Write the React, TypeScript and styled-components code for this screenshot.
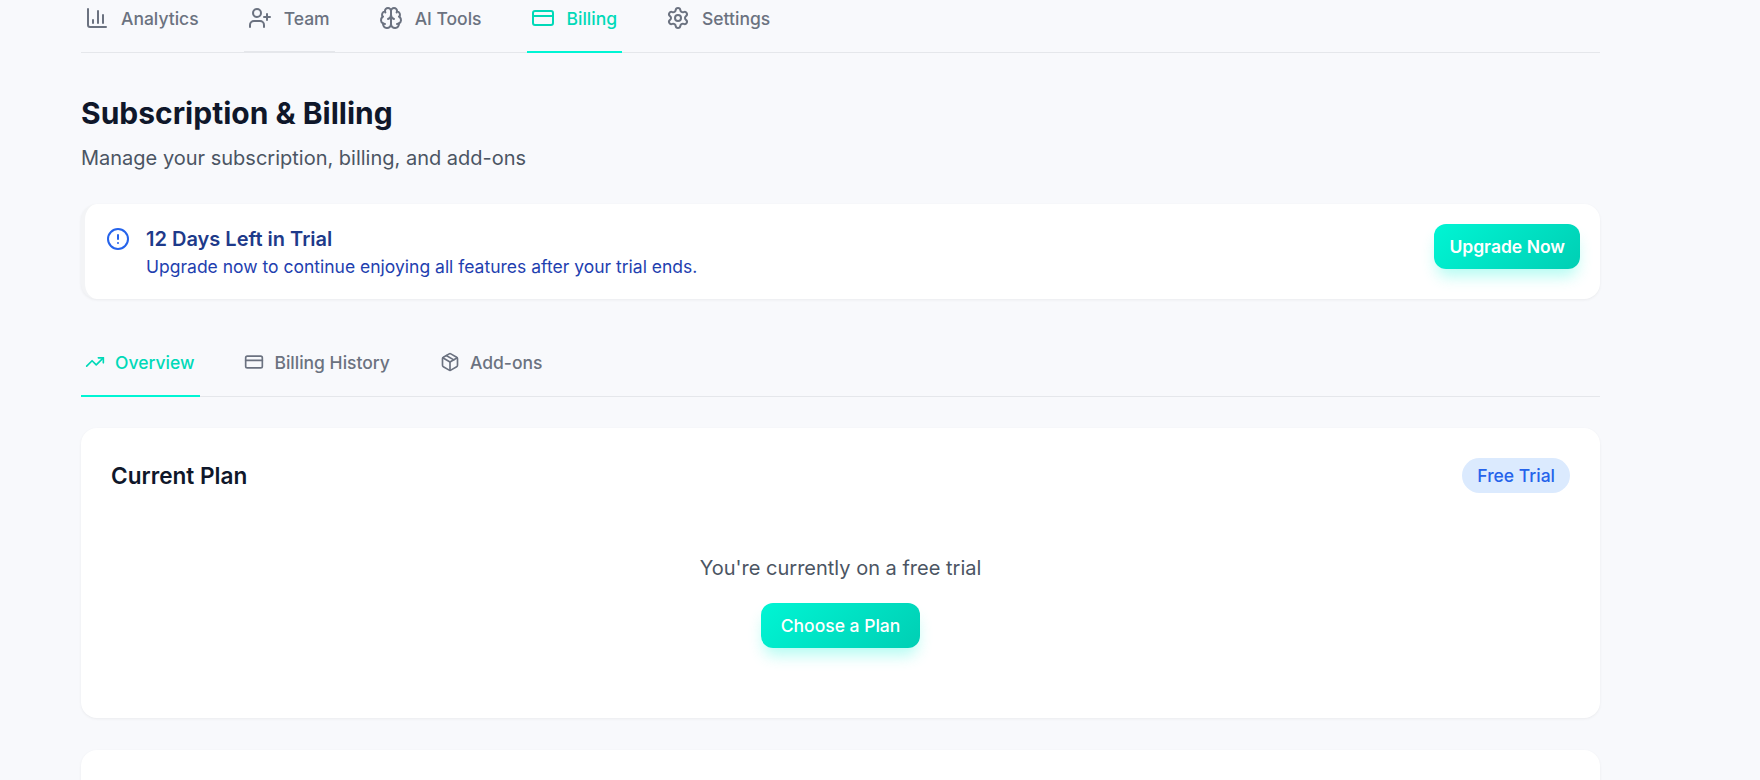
import styled, { createGlobalStyle } from "styled-components";
import {
  ChartColumn,
  CircleAlert,
  CreditCard,
  Package,
  Settings,
  TrendingUp,
  UserPlus,
} from "lucide-react";

const GlobalStyle = createGlobalStyle`
  html, body {
    margin: 0;
    height: 780px;
    overflow: hidden;
    background: #f8f9fc;
    font-family: "Inter", "Liberation Sans", sans-serif;
  }
`;

const Page = styled.div`
  width: 1519px;
  margin-left: 81px;
`;

const TopNav = styled.nav`
  display: flex;
  gap: 40px;
  height: 53px;
  border-bottom: 1px solid #e5e7eb;
  box-sizing: border-box;
`;

const TopTab = styled.div<{ $active?: boolean; $hover?: boolean }>`
  display: flex;
  align-items: center;
  gap: 12px;
  height: 53px;
  box-sizing: border-box;
  padding: 0 5px 15px 4px;
  font-size: 17.5px;
  font-weight: 500;
  color: ${({ $active }) => ($active ? "#00d9b8" : "#6b7280")};
  border-bottom: 2px solid
    ${({ $active, $hover }) => ($active ? "#00f5d4" : $hover ? "#e5e7eb" : "transparent")};
`;

const Heading = styled.header`
  padding-top: 42px;
  margin-bottom: 30px;
`;

const Title = styled.h1`
  margin: 0 0 11px;
  font-size: 30px;
  line-height: 36px;
  font-weight: 700;
  color: #0f172a;
`;

const Subtitle = styled.p`
  margin: 0;
  font-size: 20px;
  line-height: 32px;
  color: #4b5563;
`;

const Alert = styled.section`
  display: flex;
  align-items: flex-start;
  justify-content: space-between;
  height: 95px;
  box-sizing: border-box;
  padding: 20px 20px 0 21px;
  background: #fff;
  border-left: 4px solid #f3f4f6;
  border-radius: 16px;
  box-shadow: 0 1px 3px rgba(0, 0, 0, 0.06);
`;

const AlertBody = styled.div`
  display: flex;
  align-items: flex-start;
  gap: 16px;
  padding-top: 1px;
  color: #2563eb;

  svg {
    margin-top: 2px;
  }
`;

const AlertTitle = styled.div`
  font-size: 20px;
  line-height: 28px;
  font-weight: 600;
  color: #1e3a8a;
`;

const AlertText = styled.div`
  font-size: 17.5px;
  line-height: 28px;
  color: #1e40af;
`;

const GradientButton = styled.button`
  height: 45px;
  padding: 0 15px;
  border: 0;
  border-radius: 12px;
  font-family: inherit;
  font-size: 17.5px;
  color: #fff;
  background: linear-gradient(135deg, #00f5d4, #00cfb4);
  box-shadow: 0 10px 15px -3px rgba(0, 245, 212, 0.3);
`;

const UpgradeButton = styled(GradientButton)`
  font-weight: 600;
`;

const PlanButton = styled(GradientButton)`
  padding: 0 20px;
  font-weight: 500;
`;

const SubNav = styled.nav`
  display: flex;
  gap: 40px;
  margin-top: 30px;
  height: 68px;
  box-sizing: border-box;
  border-bottom: 1px solid #e5e7eb;
`;

const SubTab = styled.div<{ $active?: boolean }>`
  display: flex;
  align-items: center;
  gap: 10px;
  height: 68px;
  box-sizing: border-box;
  padding: 0 6px 0 4px;
  font-size: 17.5px;
  font-weight: 500;
  color: ${({ $active }) => ($active ? "#00d9b8" : "#6b7280")};
  border-bottom: 2px solid ${({ $active }) => ($active ? "#00f5d4" : "transparent")};
`;

const Card = styled.section`
  margin-top: 31px;
  background: #fff;
  border-radius: 16px;
  box-shadow: 0 1px 3px rgba(0, 0, 0, 0.06);
  padding: 30px;
  box-sizing: border-box;
`;

const PlanCard = styled(Card)`
  height: 290px;
`;

const CardHeader = styled.div`
  display: flex;
  align-items: center;
  justify-content: space-between;
`;

const CardTitle = styled.h2`
  margin: 0;
  font-size: 22.6px;
  line-height: 28px;
  font-weight: 600;
  color: #0f172a;
`;

const Pill = styled.span`
  padding: 0 15px;
  height: 35px;
  line-height: 35px;
  border-radius: 999px;
  font-size: 17.5px;
  font-weight: 500;
  color: #2563eb;
  background: #dbeafe;
`;

const EmptyPlan = styled.div`
  display: flex;
  flex-direction: column;
  align-items: center;
  gap: 19px;
  padding-top: 59px;
`;

const EmptyText = styled.p`
  margin: 0;
  font-size: 20px;
  line-height: 32px;
  color: #4b5563;
`;

const NextCard = styled(Card)`
  margin-top: 32px;
  height: 120px;
`;

const BrainIcon = () => (
  <svg
    width="24"
    height="24"
    viewBox="0 0 24 24"
    fill="none"
    stroke="currentColor"
    strokeWidth="2"
    strokeLinecap="round"
    strokeLinejoin="round"
  >
    <path d="M12 5a3 3 0 1 0-5.997.125 4 4 0 0 0-2.526 5.77 4 4 0 0 0 .556 6.588A4 4 0 1 0 12 18Z" />
    <path d="M12 5a3 3 0 1 1 5.997.125 4 4 0 0 1 2.526 5.77 4 4 0 0 1-.556 6.588A4 4 0 1 1 12 18Z" />
    <path d="M15 13a4.5 4.5 0 0 1-3-4 4.5 4.5 0 0 1-3 4" />
    <path d="M17.599 6.5a3 3 0 0 0 .399-1.375" />
    <path d="M6.003 5.125A3 3 0 0 0 6.401 6.5" />
    <path d="M3.477 10.896a4 4 0 0 1 .585-.396" />
    <path d="M19.938 10.5a4 4 0 0 1 .585.396" />
    <path d="M6 18a4 4 0 0 1-1.967-.516" />
    <path d="M19.967 17.484A4 4 0 0 1 18 18" />
  </svg>
);

export default function App() {
  return (
    <>
      <GlobalStyle />
      <Page>
        <TopNav>
          <TopTab>
            <ChartColumn size={24} />
            Analytics
          </TopTab>
          <TopTab $hover>
            <UserPlus size={24} />
            Team
          </TopTab>
          <TopTab>
            <BrainIcon />
            AI Tools
          </TopTab>
          <TopTab $active>
            <CreditCard size={24} />
            Billing
          </TopTab>
          <TopTab>
            <Settings size={24} />
            Settings
          </TopTab>
        </TopNav>

        <Heading>
          <Title>Subscription &amp; Billing</Title>
          <Subtitle>Manage your subscription, billing, and add-ons</Subtitle>
        </Heading>

        <Alert>
          <AlertBody>
            <CircleAlert size={24} />
            <div>
              <AlertTitle>12 Days Left in Trial</AlertTitle>
              <AlertText>Upgrade now to continue enjoying all features after your trial ends.</AlertText>
            </div>
          </AlertBody>
          <UpgradeButton>Upgrade Now</UpgradeButton>
        </Alert>

        <SubNav>
          <SubTab $active>
            <TrendingUp size={20} />
            Overview
          </SubTab>
          <SubTab>
            <CreditCard size={20} />
            Billing History
          </SubTab>
          <SubTab>
            <Package size={20} />
            Add-ons
          </SubTab>
        </SubNav>

        <PlanCard>
          <CardHeader>
            <CardTitle>Current Plan</CardTitle>
            <Pill>Free Trial</Pill>
          </CardHeader>
          <EmptyPlan>
            <EmptyText>You're currently on a free trial</EmptyText>
            <PlanButton>Choose a Plan</PlanButton>
          </EmptyPlan>
        </PlanCard>

        <NextCard />
      </Page>
    </>
  );
}
